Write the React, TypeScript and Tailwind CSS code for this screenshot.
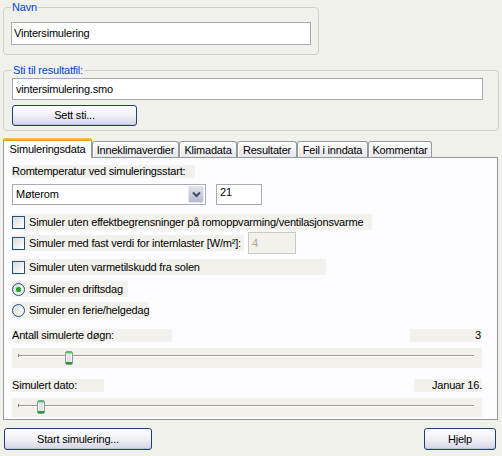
import React from 'react';

/**
 * Simuleringsdialog i Windows XP-stil (Silver)
 */

interface Tab {
  label: string;
  className: string;
  active?: boolean;
}

const tabs: Tab[] = [
  { label: 'Simuleringsdata', className: 'w-[89px]', active: true },
  { label: 'Inneklimaverdier', className: 'w-[87px]' },
  { label: 'Klimadata', className: 'w-[58px]' },
  { label: 'Resultater', className: 'w-[60px]' },
  { label: 'Feil i inndata', className: 'w-[71px]' },
  { label: 'Kommentar', className: 'w-[64px]' },
];

const labelBg = 'bg-[#f2f1ec]';

const XpButton: React.FC<{ className: string; children: React.ReactNode }> = ({ className, children }) => (
  <button
    className={`${className} rounded-[3px] border border-[#1f3f6e] bg-gradient-to-b from-white via-[#f1f1f6] to-[#d4d4e4] text-center leading-none shadow-[inset_0_-1px_0_#c2c2d6]`}
  >
    {children}
  </button>
);

const CheckBox: React.FC = () => (
  <span className="w-[13px] h-[13px] shrink-0 border border-[#1c5180] bg-gradient-to-br from-[#dcdcd7] to-white" />
);

const Radio: React.FC<{ checked?: boolean }> = ({ checked }) => (
  <span className="w-[13px] h-[13px] shrink-0 rounded-full border border-[#1c5180] bg-gradient-to-br from-[#dcdcd7] to-white flex items-center justify-center">
    {checked && <span className="w-[5px] h-[5px] rounded-full bg-[#21a121] shadow-[0_0_1px_#5fd15f]" />}
  </span>
);

const Thumb: React.FC = () => (
  <svg width="8" height="14" viewBox="0 0 8 14">
    <rect x="0.5" y="0.5" width="7" height="13" rx="1.5" fill="#f6f6f6" stroke="#8b96a3" />
    <rect x="2" y="3" width="4" height="8" fill="#e3e3e3" />
    <rect x="1" y="1" width="6" height="1.5" fill="#4fc24f" />
    <rect x="1" y="11" width="6" height="2" fill="#21a121" />
  </svg>
);

const Slider: React.FC<{ height: string; thumbPos: string }> = ({ height, thumbPos }) => (
  <div className={`relative w-[470px] ${height} ${labelBg} pl-[6px] pr-[8px] pt-[7px]`}>
    <div className="h-[2px] border-t border-[#9d9d9d] border-b border-b-white" />
    <div className="absolute left-[6px] top-[6px] w-[1px] h-[3px] bg-[#7a7a7a]" />
    <div className={`absolute ${thumbPos}`}>
      <Thumb />
    </div>
  </div>
);

export default function App() {
  return (
    <div className="w-[502px] h-[456px] bg-[#f1f1ec] font-['Liberation_Sans',Arial,sans-serif] text-[11px] tracking-[-0.2px] whitespace-nowrap text-black pl-[3px] flex flex-col overflow-hidden">
      {/* Navn */}
      <fieldset className="mt-[1px] w-[316px] border border-[#d0d0c6] rounded-[4px] pl-[7px] pb-[9px]">
        <legend className="px-[1px] leading-[13px] text-[#0046d5]">Navn</legend>
        <div className="mt-[8px] w-[300px] h-[23px] border border-[#a5acb2] bg-white pl-[2px] flex items-center">
          Vintersimulering
        </div>
      </fieldset>

      {/* Sti til resultatfil */}
      <fieldset className="mt-[9px] w-[496px] border border-[#d0d0c6] rounded-[4px] pl-[8px] pb-[4px]">
        <legend className="px-[1px] leading-[13px] text-[#0046d5]">Sti til resultatfil:</legend>
        <div className="mt-[1px] w-[471px] h-[22px] border border-[#a5acb2] bg-white pl-[3px] flex items-center">
          vintersimulering.smo
        </div>
        <XpButton className="mt-[5px] w-[125px] h-[21px] block">Sett sti...</XpButton>
      </fieldset>

      {/* Faner */}
      <div className="mt-[7px] h-[19px] flex items-end">
        {tabs.map((tab) =>
          tab.active ? (
            <div
              key={tab.label}
              className={`${tab.className} h-[20px] -mb-[1px] relative z-10 flex flex-col bg-[#fcfcfe] border-x border-[#919b9c] rounded-t-[3px]`}
            >
              <div className="h-[3px] -mx-[1px] rounded-t-[3px] bg-gradient-to-b from-[#ffc83c] to-[#e6962c]" />
              <div className="flex-1 flex items-start justify-center pt-[2px] leading-[13px]">{tab.label}</div>
            </div>
          ) : (
            <div
              key={tab.label}
              className={`${tab.className} h-[16px] flex items-center justify-center border-t border-x border-[#919b9c] rounded-t-[3px] bg-gradient-to-b from-white to-[#e6e6ec] shadow-[inset_1px_1px_0_#ffffff] leading-[13px] pt-[2px]`}
            >
              {tab.label}
            </div>
          )
        )}
      </div>

      {/* Fanepanel */}
      <div className="w-[495px] h-[263px] border border-[#919b9c] bg-[#fcfcfe] pl-[8px] pt-0 flex flex-col">
        <div className={`mt-[7px] w-[183px] h-[13px] leading-[13px] ${labelBg}`}>Romtemperatur ved simuleringsstart:</div>

        <div className="mt-[6px] flex items-center gap-[10px]">
          <div className="w-[194px] h-[21px] border border-[#a5acb2] bg-white flex items-center justify-between pl-[3px] pr-[1px]">
            <span>Møterom</span>
            <span className="w-[16px] h-[17px] rounded-[2px] border border-[#e4e6ef] bg-gradient-to-b from-[#dfe0ea] to-[#b8bbcd] flex items-center justify-center">
              <svg width="9" height="7" viewBox="0 0 9 7">
                <path d="M1 1.5 L4.5 5 L8 1.5" fill="none" stroke="#3d4d6b" strokeWidth="2" />
              </svg>
            </span>
          </div>
          <div className="w-[46px] h-[21px] border border-[#a5acb2] bg-white pl-[3px] leading-[15px]">21</div>
        </div>

        <div className={`mt-[9px] w-[360px] h-[16px] flex items-center ${labelBg}`}>
          <CheckBox />
          <span className="ml-[4px]">Simuler uten effektbegrensninger på romoppvarming/ventilasjonsvarme</span>
        </div>

        <div className="mt-[2px] h-[22px] flex items-center">
          <div className={`w-[232px] h-[16px] flex items-center ${labelBg}`}>
            <CheckBox />
            <span className="ml-[4px]">Simuler med fast verdi for internlaster [W/m²]:</span>
          </div>
          <div className="ml-[4px] w-[48px] h-[22px] border border-[#c9c9c5] bg-[#f2f1ec] pl-[3px] text-[#aca899] flex items-center">
            4
          </div>
        </div>

        <div className={`mt-[5px] w-[314px] h-[16px] flex items-center ${labelBg}`}>
          <CheckBox />
          <span className="ml-[4px]">Simuler uten varmetilskudd fra solen</span>
        </div>

        <div className={`mt-[6px] w-[116px] h-[16px] flex items-center ${labelBg}`}>
          <Radio checked />
          <span className="ml-[4px]">Simuler en driftsdag</span>
        </div>

        <div className={`mt-[5px] w-[136px] h-[16px] flex items-center ${labelBg}`}>
          <Radio />
          <span className="ml-[4px]">Simuler en ferie/helgedag</span>
        </div>

        <div className="mt-[11px] w-[470px] h-[13px] leading-[13px] flex justify-between">
          <span className={`w-[160px] ${labelBg}`}>Antall simulerte døgn:</span>
          <span className={`w-[72px] text-right pr-[1px] ${labelBg}`}>3</span>
        </div>

        <div className="mt-[6px]">
          <Slider height="h-[20px]" thumbPos="left-[53px] top-[3px]" />
        </div>

        <div className="mt-[11px] w-[470px] h-[13px] leading-[13px] flex justify-between">
          <span className={`w-[92px] ${labelBg}`}>Simulert dato:</span>
          <span className={`w-[68px] text-right ${labelBg}`}>Januar 16.</span>
        </div>

        <div className="mt-[6px]">
          <Slider height="h-[19px]" thumbPos="left-[25px] top-[2px]" />
        </div>
      </div>

      {/* Knapper */}
      <div className="mt-[8px] w-[494px] pl-[1px] pr-[1px] flex justify-between">
        <XpButton className="w-[148px] h-[22px]">Start simulering...</XpButton>
        <XpButton className="w-[72px] h-[22px]">Hjelp</XpButton>
      </div>
    </div>
  );
}
